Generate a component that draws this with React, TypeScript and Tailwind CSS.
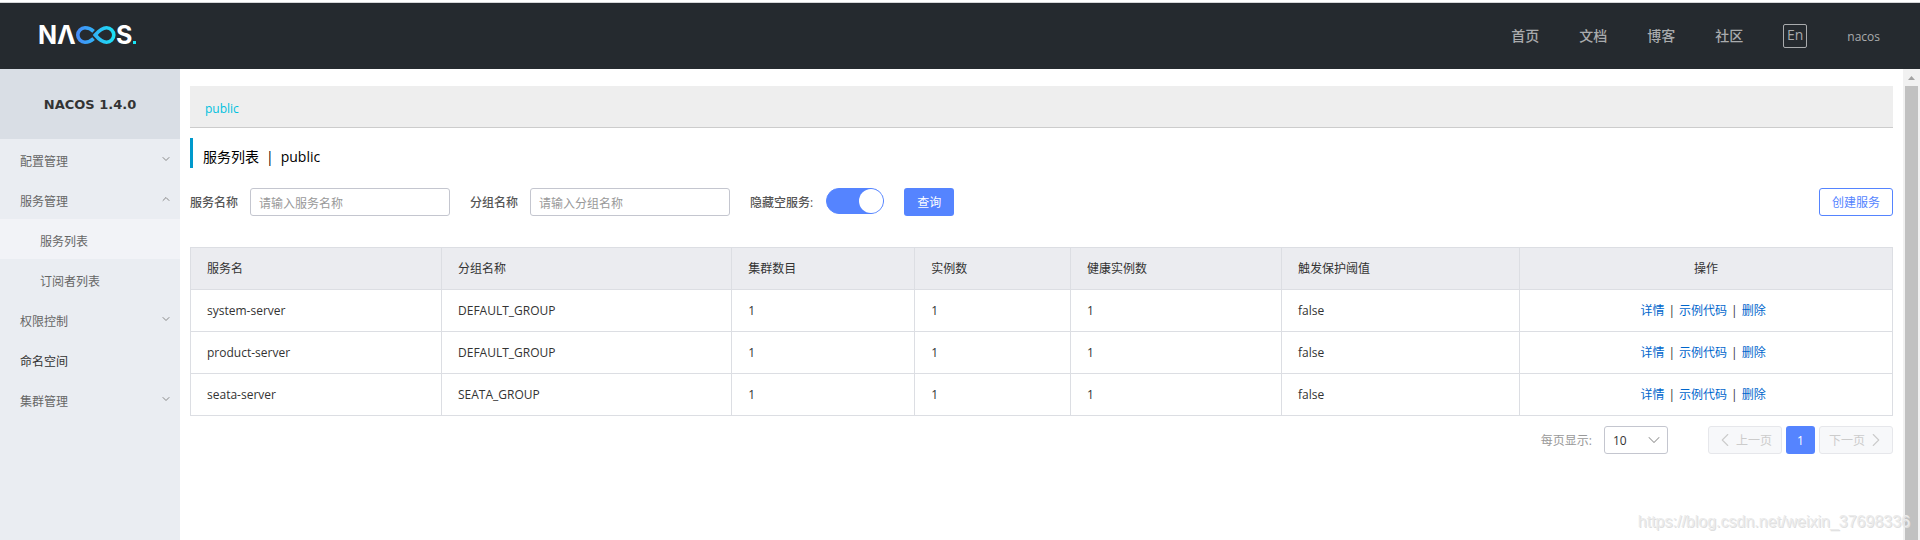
import { useState } from 'react';
import { ChevronDown, ChevronLeft, ChevronRight, ChevronUp } from 'lucide-react';

const navLinks = ['首页', '文档', '博客', '社区'];

type MenuEntry = { label: string; open?: boolean; leaf?: boolean; children?: string[] };

const menu: MenuEntry[] = [
  { label: '配置管理' },
  { label: '服务管理', open: true, children: ['服务列表', '订阅者列表'] },
  { label: '权限控制' },
  { label: '命名空间', leaf: true },
  { label: '集群管理' },
];

const services = [
  { name: 'system-server', group: 'DEFAULT_GROUP', clusters: 1, instances: 1, healthy: 1, threshold: 'false' },
  { name: 'product-server', group: 'DEFAULT_GROUP', clusters: 1, instances: 1, healthy: 1, threshold: 'false' },
  { name: 'seata-server', group: 'SEATA_GROUP', clusters: 1, instances: 1, healthy: 1, threshold: 'false' },
];

const columns = [
  { title: '服务名', width: 'w-[14.75%]' },
  { title: '分组名称', width: 'w-[17.05%]' },
  { title: '集群数目', width: 'w-[10.75%]' },
  { title: '实例数', width: 'w-[9.15%]' },
  { title: '健康实例数', width: 'w-[12.4%]' },
  { title: '触发保护阈值', width: 'w-[14%]' },
];

function Logo() {
  return (
    <svg width="104" height="40" viewBox="-4 -9 104 40" role="img" aria-label="NACOS">
      <defs>
        <linearGradient id="loop" x1="36" x2="76" y1="0" y2="0" gradientUnits="userSpaceOnUse">
          <stop offset="0" stopColor="#4688f8" />
          <stop offset="1" stopColor="#19e4f4" />
        </linearGradient>
      </defs>
      <g fill="#fff" fontFamily="Inter, sans-serif" fontWeight="700" fontSize="25">
        <text x="-2" y="20">N</text>
        <text x="17" y="20">Λ</text>
        <text x="76" y="20">S</text>
      </g>
      <g fill="none" stroke="url(#loop)" strokeWidth="3.6">
        <path d="M53.6 7.4C51 4.900 48.600 3.800 45 3.800A7.200 7.200 0 0 0 45 18.200C48.600 18.200 51 17.100 53.600 14.600" />
        <path d="M55.200 11C58.800 6.800 61.800 3.800 66.600 3.800A7.200 7.200 0 0 1 66.600 18.200C61.800 18.200 58.800 15.200 55.200 11Z" />
      </g>
      <rect x="93" y="17" width="3" height="3" fill="#19e4f4" />
    </svg>
  );
}

function Header() {
  return (
    <header className="flex h-[69px] shrink-0 items-center justify-between border-t-2 border-white bg-[#252a2f] pr-10 pl-9 shadow-[inset_0_1px_0_#d5d6d8]">
      <a href="#home" className="pb-px">
        <Logo />
      </a>
      <nav className="flex items-center gap-10 text-sm text-[#a9abad]">
        {navLinks.map((label) => (
          <a key={label} href={`#${label}`} className="font-medium">
            {label}
          </a>
        ))}
        <button type="button" className="flex size-6 items-center justify-center rounded-xs border border-[#a9abad] pb-0.5 leading-none">
          En
        </button>
        <a href="#user" className="pt-0.5 text-xs font-medium">
          nacos
        </a>
      </nav>
    </header>
  );
}

function Sidebar() {
  return (
    <aside className="w-[180px] shrink-0 bg-[#eaedf2]">
      <h1 className="flex h-[70px] items-center justify-center bg-[#d9dee5] pt-0.5 text-[13px] font-bold text-[#333] [font-family:'DejaVu_Sans',sans-serif]">
        NACOS 1.4.0
      </h1>
      <ul>
        {menu.map((entry) => (
          <li key={entry.label}>
            <button
              type="button"
              className={`flex h-10 w-full items-center justify-between pr-2 pl-5 ${entry.leaf ? 'text-[#333]' : 'text-[#666]'}`}
            >
              <span className="pt-1.5">{entry.label}</span>
              {!entry.leaf &&
                (entry.open ? (
                  <ChevronUp className="size-3 text-[#888]" strokeWidth={2} />
                ) : (
                  <ChevronDown className="size-3 text-[#888]" strokeWidth={2} />
                ))}
            </button>
            {entry.children && (
              <ul>
                {entry.children.map((child, i) => (
                  <li key={child}>
                    <a
                      href={`#${child}`}
                      className={`flex h-10 items-center pt-1.5 pl-10 text-[#666] ${i === 0 ? 'bg-[#f2f3f7]' : ''}`}
                    >
                      {child}
                    </a>
                  </li>
                ))}
              </ul>
            )}
          </li>
        ))}
      </ul>
    </aside>
  );
}

function Filters() {
  const [hideEmpty, setHideEmpty] = useState(true);
  const input =
    'h-7 w-[200px] rounded-[3px] border border-[#c4c6cf] bg-white px-2 pt-0.5 text-[#333] placeholder:text-[#999] focus:outline-none';
  return (
    <form className="mt-5 flex items-center text-[#555]" onSubmit={(e) => e.preventDefault()}>
      <label htmlFor="service" className="mr-3 pt-0.5 font-medium">
        服务名称
      </label>
      <input id="service" placeholder="请输入服务名称" className={input} />
      <label htmlFor="group" className="mr-3 ml-5 pt-0.5 font-medium">
        分组名称
      </label>
      <input id="group" placeholder="请输入分组名称" className={input} />
      <label htmlFor="hide" className="mr-[13px] ml-5 pt-0.5 font-medium">
        隐藏空服务:
      </label>
      <input
        id="hide"
        type="checkbox"
        role="switch"
        checked={hideEmpty}
        onChange={(e) => setHideEmpty(e.target.checked)}
        className="flex h-[26px] w-[58px] appearance-none self-start rounded-full border border-[#5584ff] bg-gray-200 before:size-6 before:rounded-full before:bg-white checked:justify-end checked:bg-[#5584ff]"
      />
      <button type="submit" className="ml-5 h-7 w-[50px] rounded-[3px] bg-[#5584ff] pt-0.5 text-white">
        查询
      </button>
      <button type="button" className="ml-auto h-7 w-[74px] rounded-[3px] border border-[#5584ff] bg-white pt-0.5 text-[#5584ff]">
        创建服务
      </button>
    </form>
  );
}

function ServiceTable() {
  const cell = 'border border-[#dcdee3] px-4';
  return (
    <table className="mt-[31px] w-full table-fixed border-collapse text-left text-[#333]">
      <thead>
        <tr className="h-[42px] bg-[#ebecf0]">
          {columns.map((c) => (
            <th key={c.title} scope="col" className={`${cell} ${c.width} font-normal`}>
              {c.title}
            </th>
          ))}
          <th scope="col" className={`${cell} text-center font-normal`}>
            操作
          </th>
        </tr>
      </thead>
      <tbody>
        {services.map((s) => (
          <tr key={s.name} className="h-[42px]">
            <td className={cell}>{s.name}</td>
            <td className={cell}>{s.group}</td>
            <td className={cell}>{s.clusters}</td>
            <td className={cell}>{s.instances}</td>
            <td className={cell}>{s.healthy}</td>
            <td className={cell}>{s.threshold}</td>
            <td className={cell}>
              <div className="flex justify-center gap-1 pr-1.5 text-[#06c]">
                <a href="#detail">详情</a>
                <span className="text-[#333]">|</span>
                <a href="#sample">示例代码</a>
                <span className="text-[#333]">|</span>
                <a href="#delete">删除</a>
              </div>
            </td>
          </tr>
        ))}
      </tbody>
    </table>
  );
}

function Pagination() {
  const step = 'flex h-7 w-[74px] items-center justify-center rounded-[3px] border border-[#e6e7eb] bg-[#f7f8fa] text-[#ccc]';
  return (
    <div className="mt-[10px] flex items-center justify-end">
      <label htmlFor="size" className="mr-3 pt-0.5 text-[#999]">
        每页显示:
      </label>
      <div className="relative mr-10">
        <select
          id="size"
          defaultValue="10"
          className="block h-7 w-16 appearance-none rounded-[3px] border border-[#c4c6cf] bg-white pt-0.5 pl-2 text-[#333]"
        >
          <option>10</option>
          <option>20</option>
          <option>50</option>
        </select>
        <ChevronDown className="pointer-events-none absolute top-1 right-1 size-5 text-[#999]" strokeWidth={1.25} />
      </div>
      <div className="flex gap-1">
        <button type="button" disabled className={step}>
          <ChevronLeft className="-ml-1 size-[22px] shrink-0" strokeWidth={1.25} />
          <span className="pt-0.5">上一页</span>
        </button>
        <button type="button" aria-current="page" className="h-7 w-[29px] rounded-[3px] bg-[#5584ff] pt-0.5 text-white">
          1
        </button>
        <button type="button" disabled className={step}>
          <span className="pt-0.5">下一页</span>
          <ChevronRight className="-mr-1 size-[22px] shrink-0" strokeWidth={1.25} />
        </button>
      </div>
    </div>
  );
}

function ScrollTrack() {
  return (
    <div aria-hidden="true" className="flex w-[17px] shrink-0 flex-col items-center bg-[#f1f1f1]">
      <div className="flex h-[17px] items-center">
        <svg width="7" height="4" viewBox="0 0 7 4">
          <path d="M3.500 0L7 4H0Z" fill="#a3a3a3" />
        </svg>
      </div>
      <div className="w-[13px] grow bg-[#c1c1c1]" />
    </div>
  );
}

export default function App() {
  return (
    <div className="relative flex min-h-screen flex-col bg-white text-xs [font-family:'Open_Sans','Noto_Sans_CJK_SC',sans-serif]">
      <Header />
      <div className="flex grow">
        <Sidebar />
        <main className="min-w-0 grow px-[10px] pt-[17px]">
          <div className="flex h-[42px] items-center border-b border-[#ccc] bg-[#eee] px-[15px] pt-1">
            <a href="#public" className="text-[#00c1de]">
              public
            </a>
          </div>
          <h2 className="mt-[10px] flex h-[30px] items-center gap-[7px] border-l-[3px] border-[#09c] pt-2 pl-[10px] text-sm text-black">
            <span>服务列表</span>
            <span>|</span>
            <span>public</span>
          </h2>
          <Filters />
          <ServiceTable />
          <Pagination />
        </main>
        <ScrollTrack />
      </div>
      <div className="pointer-events-none absolute right-[10px] bottom-1.5 text-base text-[#ebebeb] text-shadow-[1px_1px_0_#dedede] [font-family:'Liberation_Sans',sans-serif]">
        https://blog.csdn.net/weixin_37698336
      </div>
    </div>
  );
}
